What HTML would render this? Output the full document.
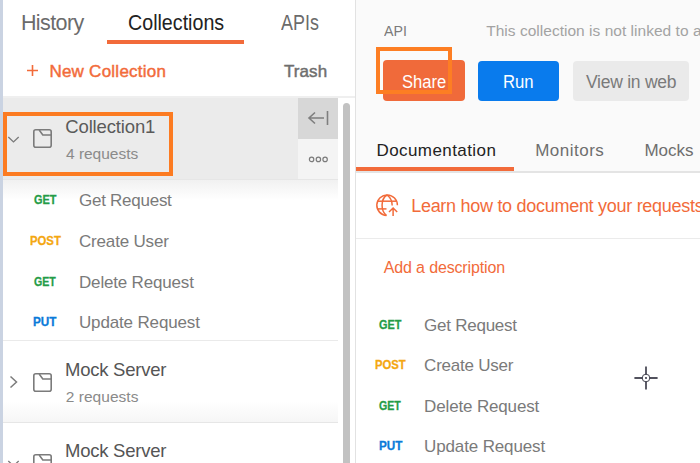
<!DOCTYPE html>
<html><head><meta charset="utf-8">
<style>
*{margin:0;padding:0;box-sizing:border-box}
html,body{width:700px;height:463px;overflow:hidden;background:#fff;font-family:"Liberation Sans",sans-serif}
.a{position:absolute}
.t{position:absolute;white-space:nowrap;line-height:1;transform-origin:0 0}
svg{position:absolute;display:block}
</style></head><body>
<div class="a" style="left:0;top:0;width:3px;height:463px;background:#cad3e2"></div>
<!-- tabs underline -->
<div class="a" style="left:107px;top:40px;width:137px;height:4px;background:#f26b3a"></div>
<!-- plus -->
<svg style="left:26px;top:64px" width="13" height="13" viewBox="0 0 13 13"><path d="M1 6.5 H12 M6.5 1 V12" stroke="#f26b3a" stroke-width="1.6"/></svg>
<!-- collection row -->
<div class="a" style="left:3px;top:98px;width:295px;height:82px;background:#ebebeb"></div>
<div class="a" style="left:3px;top:96px;width:352px;height:2px;background:#efefef"></div>
<div class="a" style="left:297.5px;top:98px;width:40.5px;height:41px;background:#d7d7d7"></div>
<div class="a" style="left:297.5px;top:139px;width:40.5px;height:40px;background:#f4f4f4"></div>
<div class="a" style="left:3px;top:179px;width:335px;height:1px;background:#e6e6e6"></div>
<div class="a" style="left:3px;top:180px;width:335px;height:20px;background:linear-gradient(#f1f1f1,#fff)"></div>
<svg style="left:305px;top:108px" width="26" height="20" viewBox="0 0 26 20"><path d="M4 10 H19 M10 4.5 L4 10 L10 15.5 M22.5 3 V17" fill="none" stroke="#7f7f7f" stroke-width="1.6"/></svg>
<svg style="left:305px;top:152px" width="26" height="14" viewBox="0 0 26 14"><circle cx="6.6" cy="7.4" r="2.2" fill="none" stroke="#7b7b7b" stroke-width="1.2"/><circle cx="13.4" cy="7.4" r="2.2" fill="none" stroke="#7b7b7b" stroke-width="1.2"/><circle cx="20.1" cy="7.4" r="2.2" fill="none" stroke="#7b7b7b" stroke-width="1.2"/></svg>
<!-- scrollbar -->
<div class="a" style="left:343px;top:103px;width:7px;height:370px;background:#c2c2c2;border-radius:3.5px"></div>
<div class="a" style="left:355px;top:0;width:1px;height:463px;background:#e2e2e2"></div>
<!-- highlight rect -->
<div class="a" style="left:3px;top:112px;width:170px;height:64px;border:4px solid #fc7b21"></div>
<!-- chevron down + folder -->
<svg style="left:6px;top:133px" width="16" height="12" viewBox="0 0 16 12"><path d="M2.3 3.9 L7.5 8.9 L12.7 3.9" fill="none" stroke="#7b7b7b" stroke-width="1.35"/></svg>
<div style="position:absolute;left:33px;top:129px"><svg width="19" height="19" viewBox="0 0 19 19"><rect x="0.8" y="0.8" width="17.4" height="17.4" rx="2" fill="none" stroke="#7b7b7b" stroke-width="1.6"/><path d="M6.2 1 L9.8 6 L18.2 6" fill="none" stroke="#7b7b7b" stroke-width="1.6"/></svg></div>
<!-- separators -->
<div class="a" style="left:3px;top:340px;width:335px;height:1px;background:#eaeaea"></div>
<div class="a" style="left:3px;top:401px;width:335px;height:21px;background:linear-gradient(#fff,#f6f6f6)"></div>
<div class="a" style="left:3px;top:422px;width:335px;height:1px;background:#e6e6e6"></div>
<svg style="left:7px;top:374px" width="14" height="16" viewBox="0 0 14 16"><path d="M3.5 2.5 L9.5 8 L3.5 13.5" fill="none" stroke="#7b7b7b" stroke-width="1.5"/></svg>
<div style="position:absolute;left:33px;top:372.5px"><svg width="19" height="19" viewBox="0 0 19 19"><rect x="0.8" y="0.8" width="17.4" height="17.4" rx="2" fill="none" stroke="#7b7b7b" stroke-width="1.6"/><path d="M6.2 1 L9.8 6 L18.2 6" fill="none" stroke="#7b7b7b" stroke-width="1.6"/></svg></div>
<svg style="left:6px;top:456.5px" width="16" height="12" viewBox="0 0 16 12"><path d="M2.3 3.9 L7.5 8.9 L12.7 3.9" fill="none" stroke="#7b7b7b" stroke-width="1.35"/></svg>
<div style="position:absolute;left:33px;top:453.5px"><svg width="19" height="19" viewBox="0 0 19 19"><rect x="0.8" y="0.8" width="17.4" height="17.4" rx="2" fill="none" stroke="#7b7b7b" stroke-width="1.6"/><path d="M6.2 1 L9.8 6 L18.2 6" fill="none" stroke="#7b7b7b" stroke-width="1.6"/></svg></div>

<!-- main -->
<div class="a" style="left:356px;top:0;width:344px;height:171px;background:#fafafa"></div>
<div class="a" style="left:383px;top:60px;width:82px;height:41px;background:#f06a3a;border-radius:4px"></div>
<div class="a" style="left:478px;top:60.5px;width:81px;height:40.5px;background:#097bed;border-radius:4px"></div>
<div class="a" style="left:573px;top:60.5px;width:116px;height:40.5px;background:#eaeaea;border-radius:4px"></div>
<div class="a" style="left:356px;top:167px;width:158px;height:4px;background:#f26b3a"></div>
<div class="a" style="left:356px;top:171px;width:344px;height:1.5px;background:#e4e4e4"></div>
<div class="a" style="left:356px;top:238px;width:344px;height:1px;background:#ebebeb"></div>
<svg style="left:374px;top:192px" width="26" height="26" viewBox="374 192 26 26"><g fill="none" stroke="#f26b3a" stroke-width="1.5"><path d="M397.4 205.3 A10.3 10.3 0 1 0 386.5 215.5"/><path d="M387 195 C380.5 199 380.5 211 386.5 215.5"/><path d="M387 195 C390.5 197.5 392.2 201 392.2 205.5"/><path d="M377.5 201.2 H396.6"/><path d="M377.6 208.9 H386.5"/><path d="M393.1 208.3 V216 M389 212 L393.1 208 L397.2 212"/></g></svg>
<div class="t" style="left:20.90px;top:13px;font-size:21.5px;color:#6b6b6b;letter-spacing:-0.583px">History</div>
<div class="t" style="left:128.39px;top:13px;font-size:21.5px;color:#222;transform:scaleX(0.9144)">Collections</div>
<div class="t" style="left:280.50px;top:13px;font-size:21.5px;color:#6b6b6b;transform:scaleX(0.8333)">APIs</div>
<div class="t" style="left:49.40px;top:63px;font-size:17px;-webkit-text-stroke:0.45px #f26b3a;color:#f26b3a;letter-spacing:0.246px">New Collection</div>
<div class="t" style="left:284.00px;top:63px;font-size:17px;-webkit-text-stroke:0.45px #6e6e6e;color:#6e6e6e;letter-spacing:0.075px">Trash</div>
<div class="t" style="left:65.30px;top:118px;font-size:18.5px;color:#5a5a5a;letter-spacing:-0.150px">Collection1</div>
<div class="t" style="left:66.00px;top:146px;font-size:15.5px;color:#8a8a8a;letter-spacing:-0.022px">4 requests</div>
<div class="t" style="left:33.83px;top:194px;font-size:12.5px;font-weight:bold;-webkit-text-stroke:0.3px #249c47;color:#249c47;transform:scaleX(0.8720)">GET</div>
<div class="t" style="left:79.00px;top:192px;font-size:17px;color:#7a7a7a;letter-spacing:-0.260px">Get Request</div>
<div class="t" style="left:29.89px;top:235px;font-size:12.5px;font-weight:bold;-webkit-text-stroke:0.3px #f4a711;color:#f4a711;transform:scaleX(0.9061)">POST</div>
<div class="t" style="left:79.00px;top:233px;font-size:17px;color:#7a7a7a;letter-spacing:-0.180px">Create User</div>
<div class="t" style="left:34.05px;top:276px;font-size:12.5px;font-weight:bold;-webkit-text-stroke:0.3px #249c47;color:#249c47;transform:scaleX(0.8480)">GET</div>
<div class="t" style="left:79.00px;top:274px;font-size:17px;color:#7a7a7a;letter-spacing:-0.177px">Delete Request</div>
<div class="t" style="left:33.46px;top:316px;font-size:12.5px;font-weight:bold;-webkit-text-stroke:0.3px #0b7bd9;color:#0b7bd9;transform:scaleX(0.9375)">PUT</div>
<div class="t" style="left:79.00px;top:314px;font-size:17px;color:#7a7a7a;letter-spacing:-0.154px">Update Request</div>
<div class="t" style="left:65.00px;top:361px;font-size:18.5px;color:#555555;letter-spacing:-0.250px">Mock Server</div>
<div class="t" style="left:65.70px;top:389px;font-size:15.5px;color:#8a8a8a;letter-spacing:0.044px">2 requests</div>
<div class="t" style="left:65.00px;top:442px;font-size:18.5px;color:#555555;letter-spacing:-0.250px">Mock Server</div>
<div class="t" style="left:383.80px;top:23px;font-size:15.5px;color:#7b7b7b;transform:scaleX(0.9167)">API</div>
<div class="t" style="left:486.20px;top:23px;font-size:15.5px;color:#a3a3a3;letter-spacing:0.024px">This collection is not linked to a</div>
<div class="t" style="left:401.65px;top:74px;font-size:17.5px;color:#fff;transform:scaleX(0.9467)">Share</div>
<div class="t" style="left:502.85px;top:74px;font-size:17.5px;color:#fff;transform:scaleX(0.9533)">Run</div>
<div class="t" style="left:586.00px;top:74px;font-size:17.5px;color:#7a7a7a;letter-spacing:-0.260px">View in web</div>
<div class="t" style="left:376.50px;top:142px;font-size:17px;color:#222;letter-spacing:0.417px">Documentation</div>
<div class="t" style="left:535.20px;top:142px;font-size:17px;color:#6e6e6e;letter-spacing:0.486px">Monitors</div>
<div class="t" style="left:644.50px;top:142px;font-size:17px;color:#6e6e6e;letter-spacing:-0.050px">Mocks</div>
<div class="t" style="left:411.20px;top:197px;font-size:18px;color:#f26b3a;letter-spacing:-0.285px">Learn how to document your requests</div>
<div class="t" style="left:383.80px;top:260px;font-size:16px;color:#f26b3a;letter-spacing:-0.150px">Add a description</div>
<div class="t" style="left:378.93px;top:319px;font-size:12.5px;font-weight:bold;-webkit-text-stroke:0.3px #249c47;color:#249c47;transform:scaleX(0.8680)">GET</div>
<div class="t" style="left:424.10px;top:317px;font-size:17px;color:#7a7a7a;letter-spacing:-0.250px">Get Request</div>
<div class="t" style="left:374.80px;top:359px;font-size:12.5px;font-weight:bold;-webkit-text-stroke:0.3px #f4a711;color:#f4a711;transform:scaleX(0.9030)">POST</div>
<div class="t" style="left:424.10px;top:357px;font-size:17px;color:#7a7a7a;letter-spacing:-0.230px">Create User</div>
<div class="t" style="left:379.15px;top:400px;font-size:12.5px;font-weight:bold;-webkit-text-stroke:0.3px #249c47;color:#249c47;transform:scaleX(0.8480)">GET</div>
<div class="t" style="left:424.10px;top:398px;font-size:17px;color:#7a7a7a;letter-spacing:-0.154px">Delete Request</div>
<div class="t" style="left:378.56px;top:440px;font-size:12.5px;font-weight:bold;-webkit-text-stroke:0.3px #0b7bd9;color:#0b7bd9;transform:scaleX(0.9375)">PUT</div>
<div class="t" style="left:424.10px;top:438px;font-size:17px;color:#7a7a7a;letter-spacing:-0.138px">Update Request</div>
<div class="a" style="left:376px;top:47px;width:76px;height:47px;border:4px solid #fd7e23"></div>
<!-- cursor -->
<svg style="left:634px;top:366px" width="24" height="24" viewBox="0 0 24 24"><g stroke="#1a1a2a" stroke-width="1.4" fill="none"><path d="M0.4 12 H8.6 M15.4 12 H23.6 M12 0.4 V8.6 M12 15.4 V23.6"/><circle cx="12" cy="12" r="2.6" stroke="#fff" stroke-width="1.5"/><circle cx="12" cy="12" r="3.8" stroke="#1a1a2a" stroke-width="0.8" /></g><circle cx="12" cy="12" r="0.9" fill="#1a1a2a"/></svg>
</body></html>
